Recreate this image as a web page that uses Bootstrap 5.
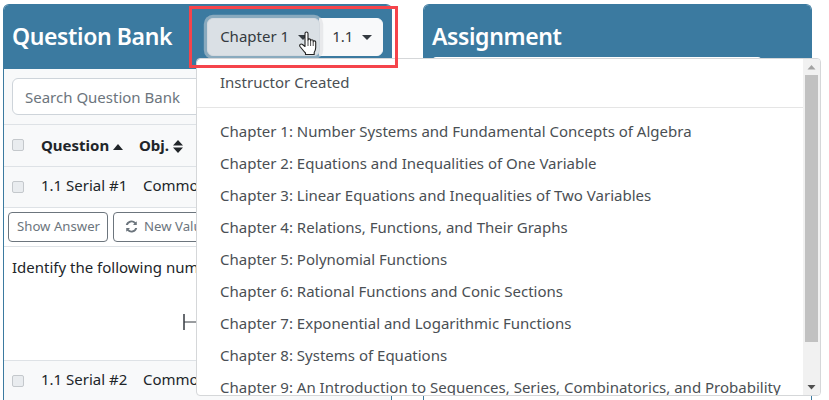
<!DOCTYPE html>
<html lang="en">
<head>
<meta charset="utf-8">
<title>Question Bank</title>
<link rel="stylesheet" href="https://cdn.jsdelivr.net/npm/bootstrap@5.3.0/dist/css/bootstrap.min.css">
<style>
html,body{height:400px;overflow:hidden;background:#fff;}
body{font-family:"Noto Sans","Liberation Sans",sans-serif;font-size:15px;color:#212529;}
.page-wrap{padding:4px 17px 0 3px;gap:31px;height:400px;position:relative;}
.bank-panel{width:389px;height:396px;border:1px solid #3b7aa0;border-bottom:0;border-radius:6px 6px 0 0;overflow:hidden;flex:none;}
.bank-head{background:#3b7aa0;height:64px;padding:0 8px;gap:35px;}
.bank-title{font-size:23px;font-weight:600;color:#fff;margin:0 0 1px;line-height:1;letter-spacing:-.38px;white-space:nowrap;}
.chap-group{flex:none;margin-top:-1px;}
.chap-group .btn{font-size:15px;height:38px;padding:0 12px;background:#f8f9fa;border-color:#f8f9fa;color:#343a40;}
.chap-group .btn::after{border-top-width:5px;border-left-width:5px;border-right-width:5px;margin-left:9px;vertical-align:.14em;}
.chap-group .btn.chap-one{width:113px;background:#dae0e5;border-color:#d3d9df;box-shadow:0 0 0 3.2px rgba(216,217,219,.5);z-index:2;padding-left:12px;text-align:left;white-space:nowrap;}
.chap-group .btn.chap-two{width:64px;}
.bank-search{background:#f8f9fa;height:56px;padding:9px 8px;border-bottom:1px solid #dee2e6;}
.bank-search .form-control{height:37px;font-size:15px;padding:0 12px;border-color:#ced4da;}
.bank-search .form-control::placeholder{color:#6c757d;}
.bank-table{table-layout:fixed;width:100%;margin:0;font-size:15px;}
.bank-table td,.bank-table th{padding:0 0 0 8px;vertical-align:middle;white-space:nowrap;overflow:hidden;border-bottom:1px solid #dee2e6;}
.bank-table thead th{height:41px;background:#f8f9fa;font-weight:700;color:#212529;}
.row-head td{height:41px;background:#f8f9fa;color:#212529;padding-bottom:2px !important;}
.row-head td:first-child{padding-bottom:0 !important;}
.row-tools td{height:39px;padding-left:4px !important;background:#fff;}
.row-body td{height:114px;background:#fff;vertical-align:top !important;padding-top:8px !important;line-height:24px;}
.chk{width:12px;height:12px;display:block;background:#e9ecef;border:1px solid #c4c8cc;border-radius:2px;}
.col-chk{width:29px;}
.col-q{width:102px;}
.obj-head{margin-left:-4px;display:inline-block;}
.tool-btn{font-size:13.2px;height:30px;padding:0 7px 0 8px;color:#6c757d;border:1px solid #6c757d;border-radius:4px;background:#fff;margin-right:5px;white-space:nowrap;}
.tool-icon{margin:0 6px 0 3px;vertical-align:-2px;}
.num-line{display:block;margin:34px 0 0 171px;line-height:0;}
.chap-menu{left:196px;top:58px;width:625px;height:338px;margin:0;padding:0;overflow:hidden;font-size:15px;border:1px solid #d5d7d9;border-radius:4px;z-index:10;color:#343a40;}
.chap-list{flex:1 1 auto;min-width:0;padding:8px 0 0;overflow:hidden;}
.chap-menu .dropdown-item{height:32px;padding:0 23px;line-height:30px;color:#4a4f54;white-space:nowrap;}
.chap-menu .dropdown-divider{margin:8px 0;border-color:#e5e5e5;opacity:1;}
.scroll-rail{flex:none;width:17px;background:#f1f1f1;}
.scroll-end{height:16px;flex:none;}
.scroll-thumb{height:267px;margin:0 2px;background:#c1c1c1;flex:none;}
.mark-box{position:absolute;left:189px;top:6px;width:209px;height:62px;border:3px solid #f5444b;z-index:20;pointer-events:none;}
.hand-cursor{position:absolute;left:299px;top:31px;z-index:15;}
.assign-input{position:absolute;left:433px;top:57px;width:328px;height:3px;background:#fff;border-radius:3px 3px 0 0;}
</style>
</head>
<body>
<div class="page-wrap d-flex align-items-start">
  <section class="bank-panel">
    <div class="bank-head d-flex align-items-center">
      <h2 class="bank-title">Question Bank</h2>
      <div class="btn-group chap-group" role="group">
        <button type="button" class="btn btn-light dropdown-toggle chap-one">Chapter 1</button>
        <button type="button" class="btn btn-light dropdown-toggle chap-two">1.1</button>
      </div>
    </div>
    <div class="bank-search"><input class="form-control" placeholder="Search Question Bank"></div>
    <table class="table bank-table">
      <colgroup><col class="col-chk"><col class="col-q"><col></colgroup>
      <thead><tr>
        <th><span class="chk"></span></th>
        <th>Question <svg width="10" height="6" viewBox="0 0 10 6"><path d="M0 6 5 0l5 6z" fill="#212529"/></svg></th>
        <th><span class="obj-head">Obj. <svg width="10" height="13" viewBox="0 0 10 13"><path d="M0 5.500 5 0l5 5.500zM0 7.500h10L5 13z" fill="#212529"/></svg></span></th>
      </tr></thead>
      <tbody>
        <tr class="row-head"><td><span class="chk"></span></td><td>1.1 Serial #1</td><td>Common Core</td></tr>
        <tr class="row-tools"><td colspan="3"><button class="tool-btn">Show Answer</button><button class="tool-btn"><svg width="13" height="13" viewBox="0 0 16 16" class="tool-icon"><path d="M14.500 1.500v4.800H9.700l1.800-1.800A4.700 4.700 0 0 0 3.500 6.300H1A7.200 7.200 0 0 1 13.200 2.800zM1.500 14.500V9.700h4.800l-1.800 1.800a4.700 4.700 0 0 0 8-1.800H15a7.200 7.200 0 0 1-12.200 3.500z" fill="#6c757d"/></svg>New Values</button></td></tr>
        <tr class="row-body"><td colspan="3">Identify the following numbers<span class="num-line"><svg width="30" height="18" viewBox="0 0 30 18"><path d="M1 1v16" stroke="#343a40" stroke-width="1.500"/><path d="M1 9h28" stroke="#343a40"/></svg></span></td></tr>
        <tr class="row-head"><td><span class="chk"></span></td><td>1.1 Serial #2</td><td>Common Core</td></tr>
      </tbody>
    </table>
  </section>
  <section class="bank-panel">
    <div class="bank-head d-flex align-items-center"><h2 class="bank-title">Assignment</h2></div>
  </section>
  <div class="assign-input"></div>
  <div class="dropdown-menu show chap-menu d-flex">
    <div class="chap-list">
      <a class="dropdown-item" href="#">Instructor Created</a>
      <hr class="dropdown-divider">
      <a class="dropdown-item" href="#">Chapter 1: Number Systems and Fundamental Concepts of Algebra</a>
      <a class="dropdown-item" href="#">Chapter 2: Equations and Inequalities of One Variable</a>
      <a class="dropdown-item" href="#">Chapter 3: Linear Equations and Inequalities of Two Variables</a>
      <a class="dropdown-item" href="#">Chapter 4: Relations, Functions, and Their Graphs</a>
      <a class="dropdown-item" href="#">Chapter 5: Polynomial Functions</a>
      <a class="dropdown-item" href="#">Chapter 6: Rational Functions and Conic Sections</a>
      <a class="dropdown-item" href="#">Chapter 7: Exponential and Logarithmic Functions</a>
      <a class="dropdown-item" href="#">Chapter 8: Systems of Equations</a>
      <a class="dropdown-item" href="#">Chapter 9: An Introduction to Sequences, Series, Combinatorics, and Probability</a>
    </div>
    <div class="scroll-rail d-flex flex-column" aria-hidden="true">
      <svg class="scroll-end" width="17" height="16" viewBox="0 0 17 16"><path d="M4.500 10.500 8.500 6l4 4.500z" fill="#a3a3a3"/></svg>
      <div class="scroll-thumb"></div>
      <div class="flex-grow-1"></div>
      <svg class="scroll-end" width="17" height="16" viewBox="0 0 17 16"><path d="M4.500 6h8l-4 4.500z" fill="#505050"/></svg>
    </div>
  </div>
  <div class="mark-box"></div>
  <svg class="hand-cursor" width="19" height="25" viewBox="0 0 19 25"><path d="M6 2.500c0-2 3-2 3 0v6.500c0-1.500 2.600-1.500 2.600 0v.8c0-1.500 2.600-1.500 2.600 0v1c0-1.300 2.500-1.300 2.500.3v5.400c0 2-.6 3.500-1.500 5v2H6.500v-1.500C4.500 20 3 18 1 15.500c-1-1.700.8-3.300 2.500-2L6 15.500z" fill="#fff" stroke="#222" stroke-width="1.100" stroke-linejoin="round"/><path d="M9 9v6M11.600 9.800V15M14.200 10.800V15" stroke="#222" stroke-width=".8"/></svg>
</div>
<script src="https://cdn.jsdelivr.net/npm/bootstrap@5.3.0/dist/js/bootstrap.bundle.min.js"></script>
</body>
</html>
